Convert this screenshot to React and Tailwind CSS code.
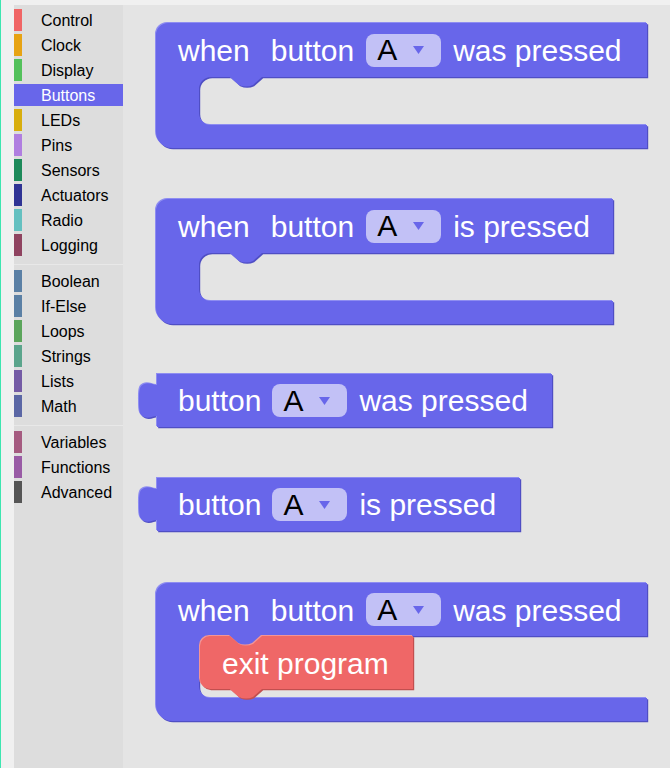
import React from "react";

const BLUE = "#6866ea";
const BLUE_LIGHT = "#8e8df1";
const BLUE_DARK = "#4f4ec4";
const RED = "#ef6767";
const RED_LIGHT = "#f49595";
const RED_DARK = "#c24f4f";

const groups = [
  [
    { name: "Control", sw: "bg-[#f06565]" },
    { name: "Clock", sw: "bg-[#e7a313]" },
    { name: "Display", sw: "bg-[#53c15b]" },
    { name: "Buttons", sw: "bg-[#6866ea]", sel: true },
    { name: "LEDs", sw: "bg-[#d8ae0d]" },
    { name: "Pins", sw: "bg-[#b07ee0]" },
    { name: "Sensors", sw: "bg-[#1d8a5a]" },
    { name: "Actuators", sw: "bg-[#2f3394]" },
    { name: "Radio", sw: "bg-[#64c0c0]" },
    { name: "Logging", sw: "bg-[#8f4360]" },
  ],
  [
    { name: "Boolean", sw: "bg-[#5b80a5]" },
    { name: "If-Else", sw: "bg-[#5b80a5]" },
    { name: "Loops", sw: "bg-[#5ba55b]" },
    { name: "Strings", sw: "bg-[#5ba58c]" },
    { name: "Lists", sw: "bg-[#745ba5]" },
    { name: "Math", sw: "bg-[#5b67a5]" },
  ],
  [
    { name: "Variables", sw: "bg-[#a55b80]" },
    { name: "Functions", sw: "bg-[#995ba5]" },
    { name: "Advanced", sw: "bg-[#555555]" },
  ],
];

function Shape({ d, fill, light, dark }) {
  return (
    <svg
      className="pointer-events-none absolute left-0 top-0 overflow-visible"
      width="1"
      height="1"
    >
      <path d={d} fill={dark} transform="translate(1.2,1.2)" />
      <path d={d} fill={light} transform="translate(-1,-1)" />
      <path d={d} fill={fill} />
    </svg>
  );
}

function hatPath(W, T, S, B = 23) {
  const y1 = T;
  const y2 = T + S;
  const H = T + S + B;
  return `M0,12 A12,12 0 0 1 12,0 H${W} V${y1} H106 L97,${y1 + 8} Q90,${y1 + 11} 83,${y1 + 8} L74,${y1} H55 A12,12 0 0 0 43,${y1 + 12} V${y2 - 12} A12,12 0 0 0 55,${y2} H${W} V${H} H16 A16,16 0 0 1 0,${H - 16} Z`;
}

function outputPath(W, H = 53) {
  return `M0,0 H${W} V${H} H0 V42 C-4,42 -8,45 -13,43 C-18,41 -18,36 -18,26.5 C-18,17 -18,12 -13,10 C-8,8 -4,11 0,11 Z`;
}

function stmtPath(W, H = 53) {
  return `M0,10 A10,10 0 0 1 10,0 H30 L39,8 Q46,11 53,8 L62,0 H${W} V${H} H62 L53,${H + 8} Q46,${H + 11} 39,${H + 8} L30,${H} H10 A10,10 0 0 1 0,${H - 10} Z`;
}

function Dropdown() {
  return (
    <span className="flex h-[33px] w-[75px] shrink-0 items-center rounded-[8px] bg-[#c2c1f6] pl-[11px]">
      <span className="text-[30px] leading-none text-black">A</span>
      <svg className="ml-[16px]" width="11" height="8" viewBox="0 0 11 8">
        <polygon points="0,0 11,0 5.5,8" fill="#6866ea" />
      </svg>
    </span>
  );
}

function HatRow({ label, h }) {
  return (
    <div className={`relative flex items-center pl-[22px] ${h}`}>
      <span className="mt-[2px] leading-none">when</span>
      <span className="ml-[21px] mt-[2px] leading-none">button</span>
      <span className="ml-[12px]">
        <Dropdown />
      </span>
      <span className="ml-[12px] mt-[2px] leading-none">{label}</span>
    </div>
  );
}

function OutputRow({ label }) {
  return (
    <div className="relative flex h-[53px] items-center pl-[21px]">
      <span className="leading-none">button</span>
      <span className="ml-[11px]">
        <Dropdown />
      </span>
      <span className="ml-[12px] leading-none">{label}</span>
    </div>
  );
}

export default function App() {
  return (
    <div className="flex h-[768px] w-[670px] overflow-hidden bg-[#f0f0f0] font-['Liberation_Sans',Arial,sans-serif]">
      <div className="w-px shrink-0 bg-[#3de6b0]" />
      <div className="flex flex-1 flex-col">
        <div className="h-[5px] shrink-0" />
        <div className="flex flex-1">
          <div className="w-[13px] shrink-0" />
          <div className="flex w-[109px] shrink-0 flex-col bg-[#dddddd] pt-[4px] text-[16px]">
            {groups.map((g, gi) => (
              <div key={gi} className="flex flex-col">
                {gi > 0 && <div className="mb-[5px] mt-[5px] h-px bg-[#e8e8e8]" />}
                {g.map((c) => (
                  <div
                    key={c.name}
                    className={`mb-[3px] flex h-[22px] items-center ${
                      c.sel ? "bg-[#6866ea] text-white" : "text-black"
                    }`}
                  >
                    <div className={`h-full w-[8px] ${c.sw}`} />
                    <span className="ml-[19px] mt-[2px] leading-none">{c.name}</span>
                  </div>
                ))}
              </div>
            ))}
          </div>
          <div className="relative flex-1 bg-[#e4e4e4] text-[30px] text-white">
            {/* Block 1 */}
            <div className="absolute left-[33px] top-[18px] h-[125px] w-[491px]">
              <Shape d={hatPath(491, 54, 48)} fill={BLUE} light={BLUE_LIGHT} dark={BLUE_DARK} />
              <HatRow label="was pressed" h="h-[54px]" />
            </div>
            {/* Block 2 */}
            <div className="absolute left-[33px] top-[194px] h-[125px] w-[457px]">
              <Shape d={hatPath(457, 54, 48)} fill={BLUE} light={BLUE_LIGHT} dark={BLUE_DARK} />
              <HatRow label="is pressed" h="h-[54px]" />
            </div>
            {/* Block 3 */}
            <div className="absolute left-[34px] top-[369px] h-[53px] w-[395px]">
              <Shape d={outputPath(395)} fill={BLUE} light={BLUE_LIGHT} dark={BLUE_DARK} />
              <OutputRow label="was pressed" />
            </div>
            {/* Block 4 */}
            <div className="absolute left-[34px] top-[473px] h-[53px] w-[363px]">
              <Shape d={outputPath(363)} fill={BLUE} light={BLUE_LIGHT} dark={BLUE_DARK} />
              <OutputRow label="is pressed" />
            </div>
            {/* Block 5 */}
            <div className="absolute left-[33px] top-[578px] h-[138px] w-[491px]">
              <Shape d={hatPath(491, 53, 62)} fill={BLUE} light={BLUE_LIGHT} dark={BLUE_DARK} />
              <HatRow label="was pressed" h="h-[53px]" />
              <div className="absolute left-[44px] top-[53px] h-[53px] w-[213px]">
                <Shape d={stmtPath(213)} fill={RED} light={RED_LIGHT} dark={RED_DARK} />
                <div className="relative flex h-[53px] items-center pl-[22px]">
                  <span className="mt-[2px] leading-none">exit program</span>
                </div>
              </div>
            </div>
          </div>
        </div>
      </div>
    </div>
  );
}
